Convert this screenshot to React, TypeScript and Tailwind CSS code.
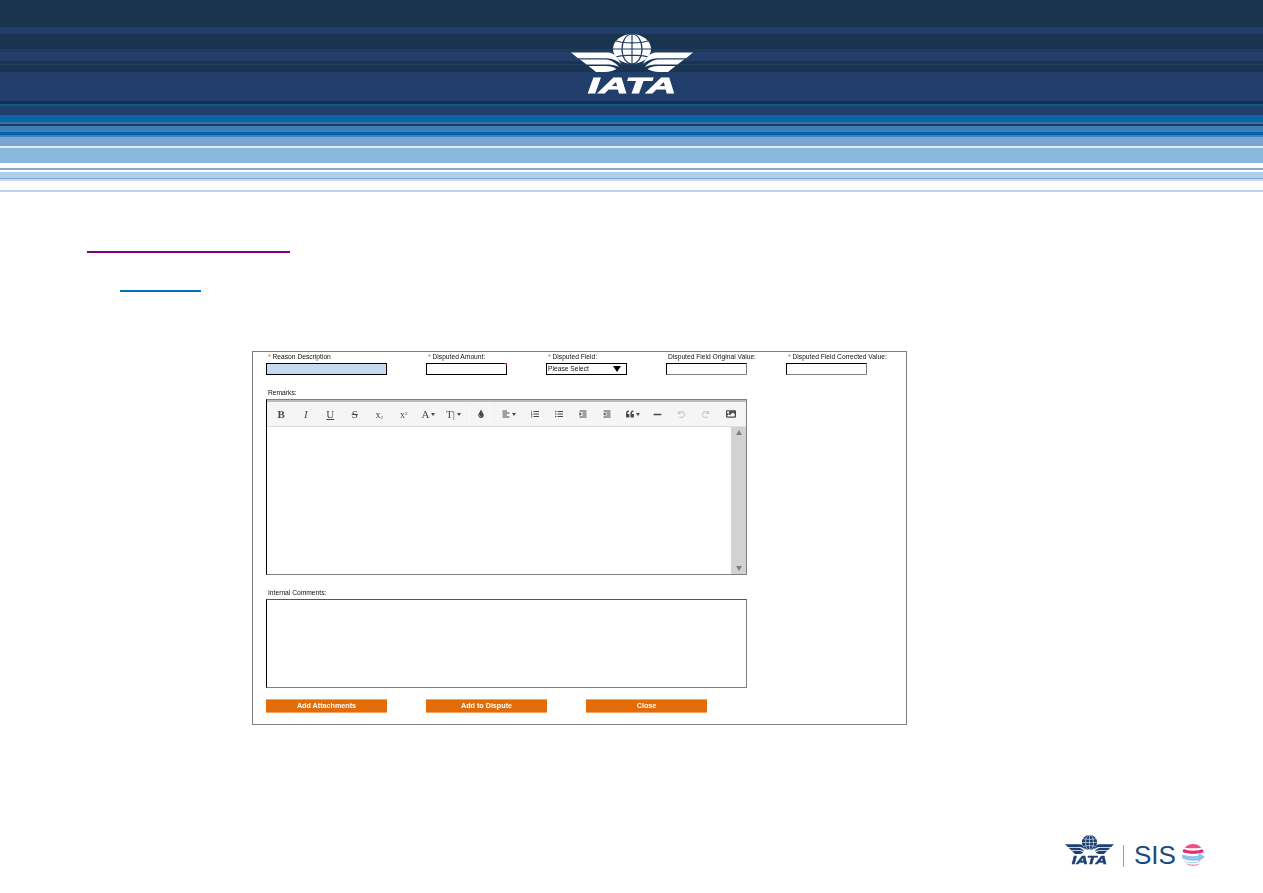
import React from "react";
import { FaTint, FaAlignLeft, FaListOl, FaListUl, FaIndent, FaOutdent, FaQuoteLeft, FaMinus, FaUndo, FaRedo, FaImage } from "react-icons/fa";

const stripes = [
  "h-[27px] bg-[#1a3450]", "h-[7px] bg-[#223f6b]", "h-[15px] bg-[#1a3450]", "h-[3px] bg-[#203a5e]",
  "h-[9px] bg-[#223f6b]", "h-[3px] bg-[#1a3450]", "h-[1px] bg-[#204060]", "h-[7px] bg-[#1a3450]",
  "h-[29px] bg-[#223f6b]", "h-[3px] bg-[#14304a]", "h-[2px] bg-[#0f5a8c]", "h-[9px] bg-[#223f6b]",
  "h-[7px] bg-[#0467a6]", "h-[2px] bg-[#3a72a6]", "h-[2px] bg-[#1c3a66]", "h-[6px] bg-[#3f7fb8]",
  "h-[3px] bg-[#0564a8]", "h-[2px] bg-[#3c80bc]", "h-[9px] bg-[#78a6d4]", "h-[2px] bg-[#e4eef6]",
  "h-[15px] bg-[#8ab8dc]", "h-[5px] bg-white", "h-[2px] bg-[#8aa8cc]", "h-[2px] bg-white",
  "h-[6px] bg-[#acd0ec]", "h-[1px] bg-[#7ea4d4]", "h-[2px] bg-[#c8dcf0]", "h-[9px] bg-white",
  "h-[2px] bg-[#b8d4ec]",
];

function IataLogo({ color, gap, className }: { color: string; gap: string; className: string }) {
  const wing = (
    <g fill={color}>
      <path d="M0 18.5 L38 18.5 C43 19 47 24 50 30 C46 26.5 42 24.5 36 24.2 L7 24.2 Z" />
      <path d="M9 25.5 L35 25.5 C40 26 45 29 48 33 C44 31 40 30.5 35 30.5 L15.5 30.5 Z" />
      <path d="M17.5 32 L35 32 C39 32 43 33 45.5 35 C42 37 38 38 34 38 L25 38 Z" />
    </g>
  );
  return (
    <svg viewBox="0 0 122 64" preserveAspectRatio="none" className={className}>
      <ellipse cx="61" cy="15" rx="19" ry="15" fill={color} />
      <g fill="none" stroke={gap} strokeWidth="1.2">
        <ellipse cx="61" cy="15" rx="10" ry="15" />
        <path d="M61 0 V30 M42 15 H80 M45 7 C53 9.5 69 9.5 77 7 M45 23 C53 20.5 69 20.5 77 23" />
      </g>
      {wing}
      <g transform="translate(122 0) scale(-1 1)">{wing}</g>
      <text x="17" y="59" fontFamily="'Liberation Sans', sans-serif" fontWeight="700" fontStyle="italic" fontSize="22.5" textLength="88" lengthAdjust="spacingAndGlyphs" fill={color} stroke={color} strokeWidth="0.9">IATA</text>
    </svg>
  );
}

function Sphere() {
  return (
    <svg viewBox="0 0 24 24" className="w-[23px] h-[23px]">
      <defs>
        <clipPath id="sph"><circle cx="11.5" cy="11.5" r="11.5" /></clipPath>
      </defs>
      <g clipPath="url(#sph)">
        <rect x="0" y="0" width="24" height="24" fill="#ffffff" />
        <path d="M0 0 H24 V3 C16 5 7 5 0 3 Z" fill="#f04d8a" />
        <path d="M0 4.5 C7 8 16 8 24 4.5 V8 C16 11 7 11 0 8 Z" fill="#e8296f" />
        <path d="M0 11 C7 13 13 13 18 12 V17 C12 18 6 17.5 0 15.5 Z" fill="#8cc4ea" />
        <path d="M2 17.5 C7 19.5 14 19.5 20 17.5 L18 19 C12 20.5 7 20 2 18.5 Z" fill="#a8d4f0" />
        <path d="M2 19.5 C8 22 15 22 22 19.5 V24 H2 Z" fill="#f58bb2" />
      </g>
      <path d="M17 8.5 L24 13.5 L17 18.5 Z" fill="#8cc4ea" />
    </svg>
  );
}

function Field({ label, req, width, inputWidth, children, cls }: { label: string; req?: boolean; width: string; inputWidth: string; children?: React.ReactNode; cls?: string }) {
  return (
    <div className={width}>
      <div className="h-[10px] leading-[10px] pl-[2px] text-[6.7px] text-[#111] whitespace-nowrap">
        {req && <span className="text-[#e8590c]">* </span>}{label}
      </div>
      <div className={`relative mt-[1px] h-[12px] border ${inputWidth} ${cls ?? "border-black"}`}>{children}</div>
    </div>
  );
}

const G = "text-[#4a4a4a]";
const serif = "font-['Liberation_Serif',serif]";

function Tool({ children, w = "w-[24.5px]", sep }: { children: React.ReactNode; w?: string; sep?: boolean }) {
  return <div className={`${w} h-full flex items-center justify-center shrink-0 ${G} ${sep ? "border-r border-[#f0f0f0]" : ""}`}>{children}</div>;
}
const Caret = () => <span className="ml-[2px] w-0 h-0 border-x-[2px] border-x-transparent border-t-[3px] border-t-[#4a4a4a]" />;

function Toolbar() {
  return (
    <div className="h-[25px] shrink-0 bg-[#f5f5f5] border-b border-[#dcdcdc] flex pl-[2px] items-stretch">
      <Tool><span className={`${serif} font-bold text-[11px]`}>B</span></Tool>
      <Tool><span className={`${serif} italic text-[11px]`}>I</span></Tool>
      <Tool><span className={`${serif} underline text-[11px]`}>U</span></Tool>
      <Tool><span className={`${serif} line-through text-[11px]`}>S</span></Tool>
      <Tool><span className={`${serif} text-[10px]`}>x<sub className="text-[5px]">2</sub></span></Tool>
      <Tool><span className={`${serif} text-[10px]`}>x<sup className="text-[5px]">2</sup></span></Tool>
      <Tool w="w-[25px]"><span className={`${serif} text-[11px]`}>A</span><Caret /></Tool>
      <Tool w="w-[26px]" sep><span className={`${serif} text-[11px]`}>T|</span><Caret /></Tool>
      <Tool w="w-[28px]" sep><FaTint size={8} /></Tool>
      <Tool w="w-[28px]"><FaAlignLeft size={8} /><Caret /></Tool>
      <Tool w="w-[24px]"><FaListOl size={8} /></Tool>
      <Tool w="w-[24px]"><FaListUl size={8} /></Tool>
      <Tool w="w-[24px]"><FaIndent size={8} /></Tool>
      <Tool w="w-[24px]"><FaOutdent size={8} /></Tool>
      <Tool w="w-[27px]"><FaQuoteLeft size={8} /><Caret /></Tool>
      <Tool w="w-[23px]"><FaMinus size={9} /></Tool>
      <Tool><FaUndo size={7} className="text-[#c4c4c4]" /></Tool>
      <Tool><FaRedo size={7} className="text-[#c4c4c4]" /></Tool>
      <Tool w="w-[25px]"><FaImage size={10} /></Tool>
    </div>
  );
}

function Btn({ label }: { label: string }) {
  return (
    <div className="w-[121px] h-[14px] bg-[#e36c09] border-y border-[#f0a468] flex items-center justify-center text-white text-[7.2px] font-bold">{label}</div>
  );
}

export default function App() {
  return (
    <div className="relative w-[1263px] h-[893px] bg-white overflow-hidden font-['Liberation_Sans',Arial,sans-serif]">
      <header className="relative flex flex-col">
        {stripes.map((s, i) => <div key={i} className={s} />)}
        <div className="absolute left-[571px] top-[34px] w-[122px] h-[64px] blur-[0.3px]">
          <IataLogo color="#ffffff" gap="#223f6b" className="w-[122px] h-[64px]" />
        </div>
      </header>

      <div className="mt-[59px] ml-[87px] w-[203px] h-[2px] bg-[#800080]" />
      <div className="mt-[37px] ml-[120px] w-[81px] h-[2px] bg-[#0070c0]" />

      <section className="mt-[59px] ml-[252px] w-[655px] h-[374px] border border-[#808080] pl-[13px]">
        <div className="blur-[0.35px]">
          <div className="flex">
            <Field label="Reason Description" req width="w-[160px]" inputWidth="w-[121px] bg-[#c5d9f1]" />
            <Field label="Disputed Amount:" req width="w-[120px]" inputWidth="w-[81px]">
              <span className="absolute right-[-1px] top-[-1px] w-0 h-0 border-l-[3px] border-l-transparent border-t-[3px] border-t-[#e02020]" />
            </Field>
            <Field label="Disputed Field:" req width="w-[120px]" inputWidth="w-[81px]">
              <div className="h-full flex items-center justify-between pl-[1px] pr-[5px] text-[6.7px] leading-none text-[#111]">
                <span>Please Select</span>
                <span className="w-0 h-0 border-x-[4px] border-x-transparent border-t-[6px] border-t-black" />
              </div>
            </Field>
            <Field label="Disputed Field Original Value:" width="w-[120px]" inputWidth="w-[81px]" cls="border-black border-r-[#808080] border-b-[#808080]" />
            <Field label="Disputed Field Corrected Value:" req width="w-[120px]" inputWidth="w-[81px]" cls="border-black border-r-[#808080] border-b-[#808080]" />
          </div>

          <div className="mt-[13px] h-[10px] leading-[10px] pl-[2px] text-[6.7px] text-[#111]">Remarks:</div>
          <div className="mt-[1px] w-[481px] h-[176px] border border-[#808080] border-l-black flex flex-col">
            <div className="h-[2px] bg-[#bcbcbc] shrink-0" />
            <Toolbar />
            <div className="flex-1 flex justify-end">
              <div className="w-[15px] bg-[#d2d2d2] flex flex-col items-center justify-between py-[3px]">
                <span className="w-0 h-0 border-x-[3px] border-x-transparent border-b-[5px] border-b-[#808080]" />
                <span className="w-0 h-0 border-x-[3px] border-x-transparent border-t-[5px] border-t-[#808080]" />
              </div>
            </div>
          </div>

          <div className="mt-[13px] h-[10px] leading-[10px] pl-[2px] text-[6.7px] text-[#111]">Internal Comments:</div>
          <div className="mt-[1px] w-[481px] h-[89px] border border-[#808080] border-l-black border-t-[#555]" />

          <div className="mt-[11px] flex gap-[39px]">
            <Btn label="Add Attachments" />
            <Btn label="Add to Dispute" />
            <Btn label="Close" />
          </div>
        </div>
      </section>

      <footer className="mt-[110px] ml-[1065px] h-[36px] flex items-end">
        <div className="mb-[4px] blur-[0.25px]">
          <IataLogo color="#1c3f74" gap="#ffffff" className="w-[49px] h-[32px] shrink-0" />
        </div>
        <div className="ml-[9px] mb-[4px] w-[1px] h-[22px] bg-[#8aa0bc]" />
        <div className="ml-[10px] mb-[3px] text-[26px] leading-[26px] text-[#1c4a80]">SIS</div>
        <div className="ml-[6px] mb-[4px]"><Sphere /></div>
      </footer>
    </div>
  );
}
